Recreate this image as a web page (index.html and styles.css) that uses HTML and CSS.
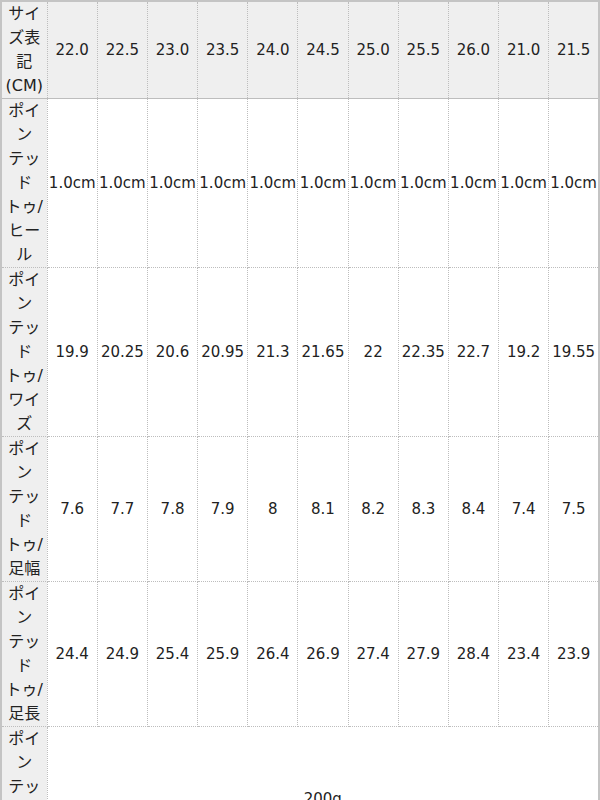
FILE: index.html
```html
<!DOCTYPE html>
<html lang="ja">
<head>
<meta charset="utf-8">
<link rel="stylesheet" href="styles.css">
</head>
<body>
<table class="size-table">
  <colgroup>
    <col class="c-head">
    <col class="c-val"><col class="c-val"><col class="c-val"><col class="c-val"><col class="c-val"><col class="c-val"><col class="c-val"><col class="c-val"><col class="c-val"><col class="c-val"><col class="c-val">
  </colgroup>
  <tr class="row-head">
    <th>サイズ表記(CM)</th>
    <td>22.0</td><td>22.5</td><td>23.0</td><td>23.5</td><td>24.0</td><td>24.5</td><td>25.0</td><td>25.5</td><td>26.0</td><td>21.0</td><td>21.5</td>
  </tr>
  <tr>
    <th>ポインテッドトゥ/ヒール</th>
    <td>1.0cm</td><td>1.0cm</td><td>1.0cm</td><td>1.0cm</td><td>1.0cm</td><td>1.0cm</td><td>1.0cm</td><td>1.0cm</td><td>1.0cm</td><td>1.0cm</td><td>1.0cm</td>
  </tr>
  <tr>
    <th>ポインテッドトゥ/ワイズ</th>
    <td>19.9</td><td>20.25</td><td>20.6</td><td>20.95</td><td>21.3</td><td>21.65</td><td>22</td><td>22.35</td><td>22.7</td><td>19.2</td><td>19.55</td>
  </tr>
  <tr>
    <th>ポインテッドトゥ/足幅</th>
    <td>7.6</td><td>7.7</td><td>7.8</td><td>7.9</td><td>8</td><td>8.1</td><td>8.2</td><td>8.3</td><td>8.4</td><td>7.4</td><td>7.5</td>
  </tr>
  <tr>
    <th>ポインテッドトゥ/足長</th>
    <td>24.4</td><td>24.9</td><td>25.4</td><td>25.9</td><td>26.4</td><td>26.9</td><td>27.4</td><td>27.9</td><td>28.4</td><td>23.4</td><td>23.9</td>
  </tr>
  <tr>
    <th>ポインテッドトゥ/重量</th>
    <td colspan="11">200g</td>
  </tr>
</table>
</body>
</html>
```
FILE: styles.css
```css
html, body {
  margin: 0;
  padding: 0;
  background: #fff;
}
.size-table {
  border-collapse: collapse;
  table-layout: fixed;
  width: 600px;
  border: 2px solid #c4c4c4;
  font-family: "DejaVu Sans", "Noto Sans CJK JP", sans-serif;
  font-size: 15px;
  line-height: 24px;
  color: #222;
}
.c-head { width: 46px; }
.c-val { width: 50px; }
.size-table th,
.size-table td {
  padding: 0;
  text-align: center;
  vertical-align: middle;
  font-weight: normal;
  border: 1px dotted #bdbdbd;
}
.size-table th {
  background: #efefef;
  font-size: 16px;
  line-height: 24px;
  line-break: strict;
  word-break: normal;
  border-left: 2px solid #c4c4c4;
}
.size-table td {
  white-space: nowrap;
}
.row-head th,
.row-head td {
  background: #efefef;
  border-bottom: 1px solid #bdbdbd;
  border-top: 2px solid #c4c4c4;
}
```
